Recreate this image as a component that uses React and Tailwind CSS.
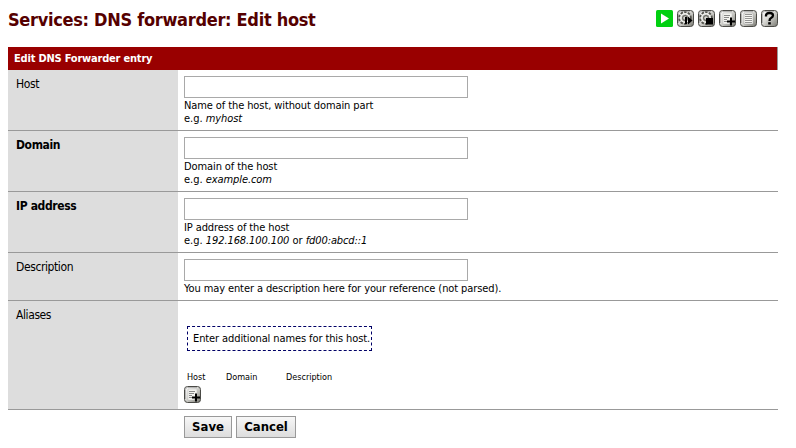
import React from 'react';

function Tile({ id, children }) {
  return (
    <svg width="17" height="17" viewBox="0 0 17 17" className="block shrink-0">
      <defs>
        <linearGradient id={id} x1="0" y1="0" x2="1" y2="1">
          <stop offset="0" stopColor="#fff" />
          <stop offset=".45" stopColor="#d8d8d4" />
          <stop offset="1" stopColor="#77776f" />
        </linearGradient>
      </defs>
      <rect x=".5" y=".5" width="16" height="16" rx="3" fill={`url(#${id})`} stroke="#4a4a46" />
      <path d="M1.5 13V3.5Q1.5 1.5 3.5 1.5H13" fill="none" stroke="#aaa" strokeWidth=".8" />
      {children}
    </svg>
  );
}

function Gear() {
  return (
    <g fill="none">
      <circle cx="8" cy="8" r="5.2" stroke="#55554f" strokeWidth="3.2" strokeDasharray="2.2 1.1" />
      <circle cx="8" cy="8" r="4.2" stroke="#f4f4f0" strokeWidth="1.6" />
      <circle cx="8" cy="8" r="2.4" stroke="#66665f" strokeWidth="1.2" />
    </g>
  );
}

function AddIcon({ id }) {
  return (
    <Tile id={id}>
      <path d="M4 3h9v8l-3 3H4z" fill="#f3f3ef" stroke="#bbb" strokeWidth=".5" />
      <path d="M5 5.5h6M5 7.5h5M5 9.5h3M5 11.5h3" stroke="#888" />
      <path d="M12 7.5v8M8 11.5h8" stroke="#000" strokeWidth="2" />
    </Tile>
  );
}

function Toolbar() {
  return (
    <div className="flex gap-1 pt-[10px]">
      <svg width="17" height="17" viewBox="0 0 17 17" className="block">
        <rect width="17" height="17" rx="1.5" fill="#00d010" />
        <path d="M5 3.5v10l8-5z" fill="#fff" />
      </svg>
      <Tile id="restart">
        <Gear />
        <path d="M8 7h2v7H8zM11 6.5v8l4.5-4z" fill="#000" />
      </Tile>
      <Tile id="stop">
        <Gear />
        <path d="M8 8h7v6.500H8z" fill="#000" />
      </Tile>
      <AddIcon id="add" />
      <Tile id="log">
        <path d="M4 3h9v11H4z" fill="#f7f7f3" stroke="#999" strokeWidth=".5" />
        <path d="M5 4.500h7M5 6.500h7M5 8.500h7M5 10.500h7M5 12.500h7" stroke="#888" strokeWidth=".9" />
      </Tile>
      <Tile id="help">
        <path d="M5 6.500V5.500Q5 3 8.500 3T12 5.500Q12 7 10 8Q8.500 8.700 8.500 11" fill="none" stroke="#000" strokeWidth="2.300" />
        <path d="M7.200 12.200h2.600v2.300H7.200z" fill="#000" />
      </Tile>
    </div>
  );
}

function Row({ label, bold, height, children }) {
  return (
    <div className={`flex border-b border-[#999] ${height}`}>
      <div className={`w-[170px] shrink-0 bg-[#ddd] pl-2 pt-[6px] text-[12px] leading-4 ${bold ? 'font-bold tracking-[-0.35px]' : 'tracking-[-0.4px]'}`}>
        {label}
      </div>
      <div className="flex-1 pl-[6px] pt-[6px] text-[11px] leading-[13px]">{children}</div>
    </div>
  );
}

function Field() {
  return <input type="text" className="mb-px block h-[22px] w-[284px] border border-[#a9a9a9] bg-white px-1 outline-none" />;
}

function Button({ children, width }) {
  return (
    <button className={`h-[22px] border border-[#999] bg-linear-to-b from-[#f7f7f7] to-[#ddd] text-[13px] leading-5 font-bold font-['DejaVu_Sans_Condensed','DejaVu_Sans',sans-serif] ${width}`}>
      {children}
    </button>
  );
}

export default function App() {
  return (
    <div className="h-[448px] w-[796px] overflow-hidden bg-white pl-2 pr-[18px] font-['DejaVu_Sans_Condensed','DejaVu_Sans',sans-serif] text-black">
      <header className="flex h-[47px] justify-between">
        <h1 className="pt-2 text-[18px] leading-6 font-bold tracking-[-0.3px] whitespace-nowrap text-[#550000]">Services: DNS forwarder: Edit host</h1>
        <Toolbar />
      </header>
      <div className="h-[23px] border-r border-[#999] bg-[#990000] pl-[6px] text-[11px] leading-[24px] font-bold text-white">
        <span className="tracking-[-0.2px]">Edit DNS Forwarder entry</span>
      </div>
      <Row label="Host" height="h-[61px]">
        <Field />
        <p className="tracking-[-0.1px]">Name of the host, without domain part</p>
        <p>e.g. <em className="tracking-[-0.1px]">myhost</em></p>
      </Row>
      <Row label="Domain" bold height="h-[61px]">
        <Field />
        <p className="tracking-[-0.1px]">Domain of the host</p>
        <p>e.g. <em className="tracking-[-0.1px]">example.com</em></p>
      </Row>
      <Row label="IP address" bold height="h-[61px]">
        <Field />
        <p className="tracking-[-0.1px]">IP address of the host</p>
        <p>e.g. <em className="tracking-[-0.1px]">192.168.100.100</em> or <em className="tracking-[-0.1px]">fd00:abcd::1</em></p>
      </Row>
      <Row label="Description" height="h-[48px]">
        <Field />
        <p className="tracking-[-0.1px]">You may enter a description here for your reference (not parsed).</p>
      </Row>
      <Row label="Aliases" height="h-[109px]">
        <div className="mt-[19px] ml-[3px] h-[25px] w-[185px] border border-dashed border-[#000066] pl-[5px] leading-[24px] tracking-[-0.1px] whitespace-nowrap">
          Enter additional names for this host.
        </div>
        <div className="mt-5 flex h-[15px] pl-[3px] text-[9px] leading-[13px]">
          <span className="w-[39px]">Host</span>
          <span className="w-[60px]">Domain</span>
          <span>Description</span>
        </div>
        <AddIcon id="addAlias" />
      </Row>
      <div className="flex gap-1 pt-[6px] pl-[176px]">
        <Button width="w-[48px]">Save</Button>
        <Button width="w-[60px]">Cancel</Button>
      </div>
    </div>
  );
}
